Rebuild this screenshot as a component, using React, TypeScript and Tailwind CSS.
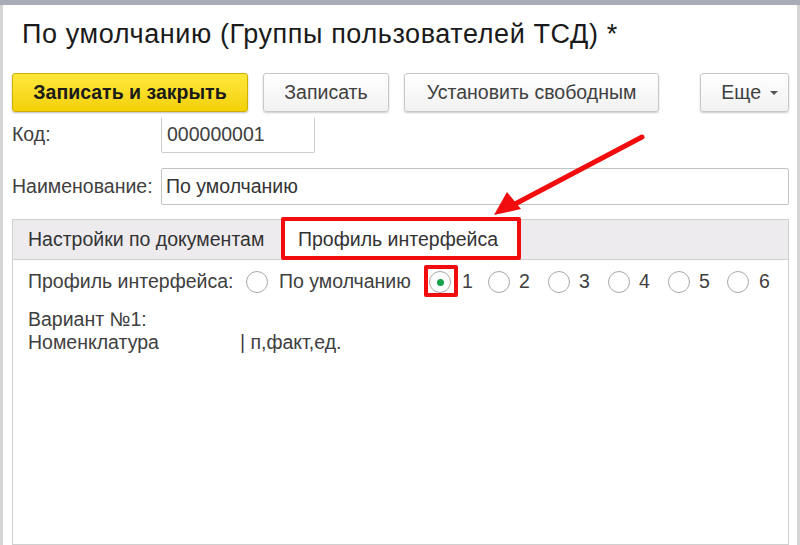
import React from "react";

const F = { fontFamily: '"Liberation Sans", Arial, sans-serif' };

function Radio({ checked = false }: { checked?: boolean }) {
  return (
    <span className="w-[22px] h-[22px] rounded-full border-[1.5px] border-[#a8a8a8] bg-white flex items-center justify-center shrink-0">
      {checked && <span className="w-[7px] h-[7px] rounded-full bg-[#17a34a]" />}
    </span>
  );
}

export default function App() {
  return (
    <div className="relative w-[800px] h-[545px] overflow-hidden bg-white text-[#404040]" style={F}>
      <div className="h-[5px] bg-[#a9acb4]" />
      <div className="h-[540px] border-l-[3px] border-r-[3px] border-[#d4d4d4] flex flex-col pl-[9px] pr-[8px]">
        <div className="h-[68px] pl-[10px] pt-[14px] text-[27px] tracking-[0.6px] text-[#1a1a1a] leading-[30px] whitespace-nowrap">
          По умолчанию (Группы пользователей ТСД) *
        </div>
        <div className="flex items-center h-[39px] text-[19.5px]">
          <button className="h-[39px] w-[236px] rounded-[3px] border border-[#cfb000] bg-gradient-to-b from-[#ffe83a] to-[#f3d000] shadow-[0_1px_2px_rgba(0,0,0,0.25)] font-bold text-[#1a1a1a]">
            Записать и закрыть
          </button>
          <button className="ml-[15px] h-[39px] w-[126px] rounded-[3px] border border-[#c8c8c8] bg-gradient-to-b from-white to-[#f1f1f1] shadow-[0_1px_2px_rgba(0,0,0,0.2)] text-[#404040]">
            Записать
          </button>
          <button className="ml-[15px] h-[39px] w-[255px] rounded-[3px] border border-[#c8c8c8] bg-gradient-to-b from-white to-[#f1f1f1] shadow-[0_1px_2px_rgba(0,0,0,0.2)] text-[#404040]">
            Установить свободным
          </button>
          <button className="ml-auto h-[39px] w-[89px] rounded-[3px] border border-[#c8c8c8] bg-gradient-to-b from-white to-[#f1f1f1] shadow-[0_1px_2px_rgba(0,0,0,0.2)] text-[#404040] flex items-center justify-end pr-[10px] gap-[9px]">
            Еще
            <span className="w-0 h-0 border-l-[4px] border-r-[4px] border-t-[4px] border-l-transparent border-r-transparent border-t-[#555]" />
          </button>
        </div>
        <div className="flex items-center mt-[6px] h-[36px] text-[19.5px]">
          <span className="w-[149px] -mt-[2px]">Код:</span>
          <div className="w-[154px] h-[36px] border border-[#cdcdcd] rounded-[2px] pl-[5px] flex items-center -mt-[2px] border-t-transparent">
            000000001
          </div>
        </div>
        <div className="flex items-center mt-[14px] h-[37px] text-[19.5px]">
          <span className="w-[149px] whitespace-nowrap">Наименование:</span>
          <div className="flex-1 h-[37px] border border-[#c4c4c4] rounded-[2px] pl-[4px] flex items-center text-[#333]">
            По умолчанию
          </div>
        </div>
        <div className="mt-[14px] flex h-[40px] bg-[#eeebef] border border-[#d0d0d0] border-b-0 text-[19.5px] text-[#333]">
          <div className="w-[270px] pl-[15px] flex items-center whitespace-nowrap">Настройки по документам</div>
          <div className="w-[236px] bg-white flex items-center pl-[15px] whitespace-nowrap">Профиль интерфейса</div>
        </div>
        <div className="flex-1 border border-[#d0d0d0] pl-[15px] pt-[8px] text-[19.5px] text-[#404040]">
          <div className="flex items-center h-[28px] whitespace-nowrap">
            <span className="w-[218px]">Профиль интерфейса:</span>
            <Radio />
            <span className="ml-[11px] w-[150px]">По умолчанию</span>
            <Radio checked />
            <span className="ml-[11px] w-[26px]">1</span>
            <Radio />
            <span className="ml-[9px] w-[29px]">2</span>
            <Radio />
            <span className="ml-[9px] w-[29px]">3</span>
            <Radio />
            <span className="ml-[9px] w-[29px]">4</span>
            <Radio />
            <span className="ml-[9px] w-[28px]">5</span>
            <Radio />
            <span className="ml-[10px]">6</span>
          </div>
          <div className="mt-[12px] leading-[23px]">Вариант №1:</div>
          <div className="leading-[23px] flex whitespace-nowrap">
            <span className="w-[212px]">Номенклатура</span>
            <span>| п,факт,ед.</span>
          </div>
        </div>
      </div>

      {/* annotations */}
      <div className="absolute left-[281px] top-[217px] w-[240px] h-[43px] border-[4px] border-[#f10d0d] rounded-[2px]" />
      <div className="absolute left-[424px] top-[265px] w-[34px] h-[32px] border-[4px] border-[#f10d0d] rounded-[2px]" />
      <svg className="absolute left-0 top-0" width="800" height="545" viewBox="0 0 800 545">
        <line x1="642" y1="137" x2="515" y2="204" stroke="#f10d0d" strokeWidth="5" strokeLinecap="round" />
        <polygon points="494,215 507,192 521,209" fill="#f10d0d" />
      </svg>
    </div>
  );
}
